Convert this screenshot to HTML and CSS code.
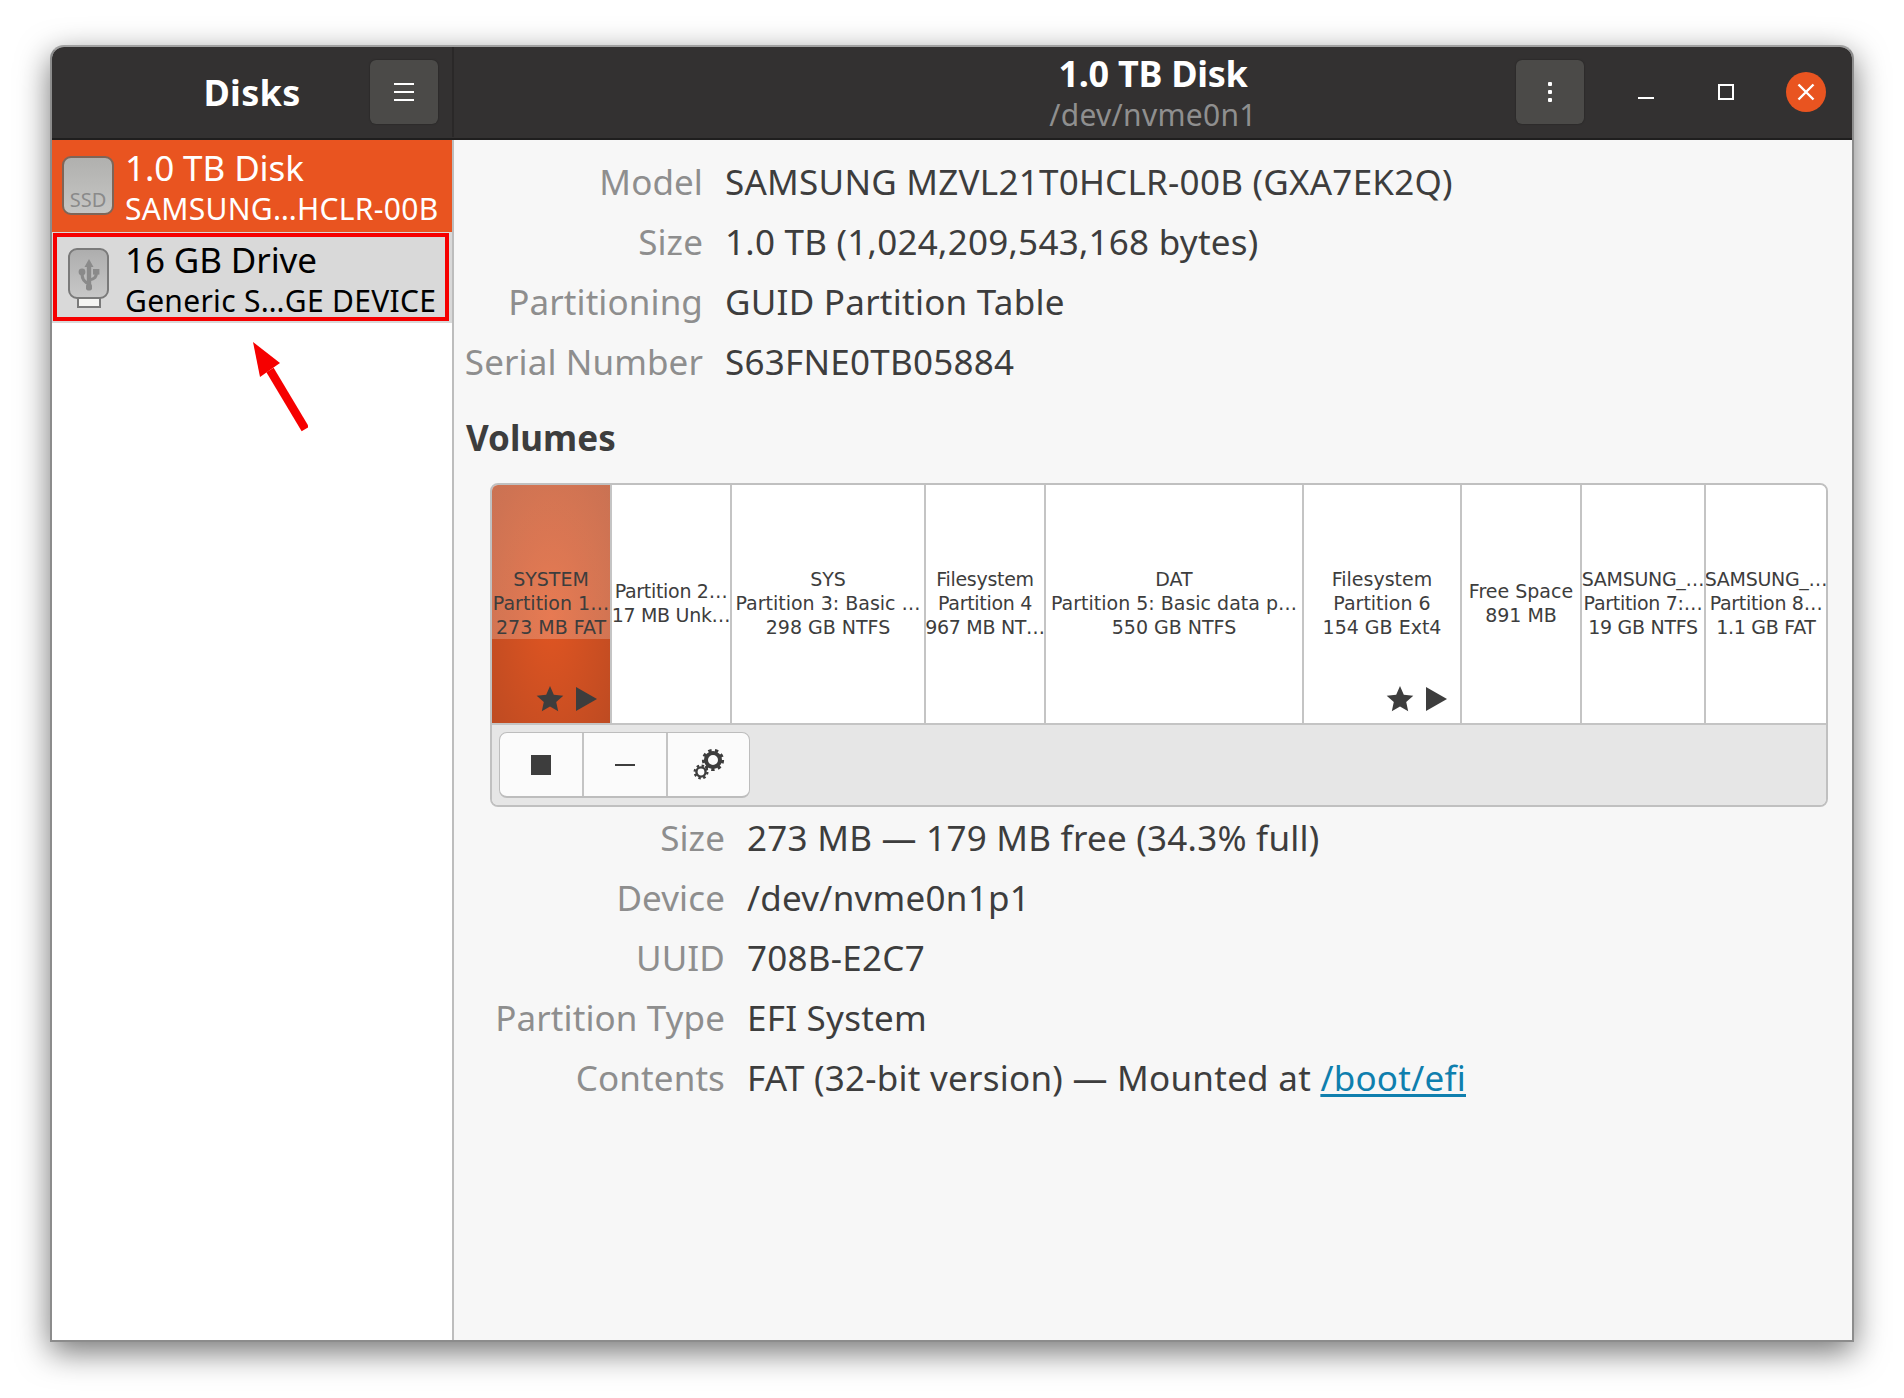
FILE: index.html
```html
<!DOCTYPE html>
<html lang="en">
<head>
    <meta charset="UTF-8">
    <title>Disks</title>
    <link rel="stylesheet" href="styles.css">
</head>
<body>
    <div class="window">
        <header class="titlebar">
            <div class="head head-side">
                <span></span>
                <h1 class="app-title">Disks</h1>
                <button class="head-btn menu-btn" aria-label="Menu"><i></i><i></i><i></i></button>
            </div>
            <div class="head head-main">
                <span></span>
                <div class="disk-title">
                    <h2>1.0 TB Disk</h2>
                    <p>/dev/nvme0n1</p>
                </div>
                <div class="controls">
                    <button class="head-btn kebab-btn" aria-label="Drive options"><i></i><i></i><i></i></button>
                    <button class="win-btn" aria-label="Minimize"><span class="win-min"></span></button>
                    <button class="win-btn" aria-label="Maximize"><span class="win-max"></span></button>
                    <button class="win-btn" aria-label="Close">
                        <svg class="win-close" viewBox="0 0 40 40">
                            <circle cx="20" cy="20" r="20" fill="#e95420"/>
                            <path d="M12.5 12.5l15 15M27.5 12.5l-15 15" stroke="#fff" stroke-width="2.4"/>
                        </svg>
                    </button>
                </div>
            </div>
        </header>

        <div class="content">
            <!-- Drive list -->
            <aside class="sidebar">
                <div class="drive drive-active">
                    <svg class="drive-icon" viewBox="0 0 52 60">
                        <defs>
                            <linearGradient id="ssdFill" x1="0" y1="0" x2="0" y2="1">
                                <stop offset="0" stop-color="#b0b0ae"/>
                                <stop offset="1" stop-color="#c6c6c4"/>
                            </linearGradient>
                        </defs>
                        <rect x="1" y="1" width="50" height="57" rx="8" fill="url(#ssdFill)" stroke="#7d6558" stroke-width="2"/>
                        <text x="26" y="51" class="ssd-label">SSD</text>
                    </svg>
                    <div class="drive-text">
                        <div class="drive-name">1.0 TB Disk</div>
                        <div class="drive-model">SAMSUNG…HCLR-00B</div>
                    </div>
                </div>
                <div class="drive drive-marked">
                    <svg class="drive-icon" viewBox="0 0 52 60">
                        <defs>
                            <linearGradient id="usbFill" x1="0" y1="0" x2="0" y2="1">
                                <stop offset="0" stop-color="#adadad"/>
                                <stop offset="1" stop-color="#c8c8c8"/>
                            </linearGradient>
                        </defs>
                        <rect x="16" y="49" width="22" height="10" fill="#f4f4f2" stroke="#7a7a7a" stroke-width="2"/>
                        <rect x="7" y="1" width="39" height="49" rx="8" fill="url(#usbFill)" stroke="#7a7a7a" stroke-width="2"/>
                        <g fill="#8a8a8a">
                            <polygon points="27,11 22.5,19 31.5,19"/>
                            <rect x="24.8" y="17" width="4.4" height="21"/>
                            <circle cx="20" cy="24" r="3.4"/>
                            <rect x="31" y="21" width="6.4" height="5.6"/>
                            <rect x="24" y="36" width="6" height="6.4" rx="1.8"/>
                        </g>
                        <path d="M27 35.5C21 34 20 30 20 25M27 32C33 31 34.4 29 34.4 24" fill="none" stroke="#8a8a8a" stroke-width="3.2"/>
                    </svg>
                    <div class="drive-text">
                        <div class="drive-name">16 GB Drive</div>
                        <div class="drive-model">Generic S…GE DEVICE</div>
                    </div>
                </div>
                <svg class="arrow" viewBox="0 0 60 95">
                    <path d="M22 33L57.3 92" stroke="#f60000" stroke-width="8.5"/>
                    <polygon points="5,5 12,40 32,26" fill="#f60000"/>
                </svg>
            </aside>

            <main class="details">
                <dl class="props">
                    <dt>Model</dt><dd>SAMSUNG MZVL21T0HCLR-00B (GXA7EK2Q)</dd>
                    <dt>Size</dt><dd>1.0 TB (1,024,209,543,168 bytes)</dd>
                    <dt>Partitioning</dt><dd>GUID Partition Table</dd>
                    <dt>Serial Number</dt><dd>S63FNE0TB05884</dd>
                </dl>

                <h3 class="section-title">Volumes</h3>

                <section class="volumes">
                    <div class="strip">
                        <div class="part part-selected">
                            <div>SYSTEM<br>Partition 1…<br>273 MB FAT</div>
                            <span class="part-flags">
                                <svg viewBox="0 0 28 26"><polygon points="14,0 17.8,8.7 27.3,9.7 20.2,16 22.2,25.3 14,20.5 5.8,25.3 7.8,16 0.7,9.7 10.2,8.7"/></svg>
                                <svg viewBox="0 0 21 24"><polygon points="0,0 21,12 0,24"/></svg>
                            </span>
                        </div>
                        <div class="part part-tight"><div>Partition 2…<br>17 MB Unk…</div></div>
                        <div class="part"><div>SYS<br>Partition 3: Basic …<br>298 GB NTFS</div></div>
                        <div class="part part-tight"><div>Filesystem<br>Partition 4<br>967 MB NT…</div></div>
                        <div class="part"><div>DAT<br>Partition 5: Basic data p…<br>550 GB NTFS</div></div>
                        <div class="part">
                            <div>Filesystem<br>Partition 6<br>154 GB Ext4</div>
                            <span class="part-flags">
                                <svg viewBox="0 0 28 26"><polygon points="14,0 17.8,8.7 27.3,9.7 20.2,16 22.2,25.3 14,20.5 5.8,25.3 7.8,16 0.7,9.7 10.2,8.7"/></svg>
                                <svg viewBox="0 0 21 24"><polygon points="0,0 21,12 0,24"/></svg>
                            </span>
                        </div>
                        <div class="part"><div>Free Space<br>891 MB</div></div>
                        <div class="part part-tight"><div>SAMSUNG_…<br>Partition 7:…<br>19 GB NTFS</div></div>
                        <div class="part part-tight"><div>SAMSUNG_…<br>Partition 8…<br>1.1 GB FAT</div></div>
                    </div>
                    <div class="toolbar">
                        <div class="tool-group">
                            <button class="tool" aria-label="Unmount"><span class="icon-stop"></span></button>
                            <button class="tool" aria-label="Delete"><span class="icon-minus"></span></button>
                            <button class="tool" aria-label="Settings">
                                <svg class="icon-gears" viewBox="0 0 32 32">
                                    <g fill="none" stroke="#3d3d3d">
                                        <circle cx="20" cy="11" r="7" stroke-width="4"/>
                                        <circle cx="20" cy="11" r="9.6" stroke-width="3" stroke-dasharray="3.35 3.35"/>
                                        <circle cx="8" cy="23" r="4.6" stroke-width="2.4"/>
                                        <circle cx="8" cy="23" r="6.4" stroke-width="2.2" stroke-dasharray="2.5 2.5"/>
                                    </g>
                                </svg>
                            </button>
                        </div>
                    </div>
                </section>

                <dl class="props props-volume">
                    <dt>Size</dt><dd>273 MB — 179 MB free (34.3% full)</dd>
                    <dt>Device</dt><dd>/dev/nvme0n1p1</dd>
                    <dt>UUID</dt><dd>708B-E2C7</dd>
                    <dt>Partition Type</dt><dd>EFI System</dd>
                    <dt>Contents</dt><dd>FAT (32-bit version) — Mounted at <a href="#">/boot/efi</a></dd>
                </dl>
            </main>
        </div>
    </div>
</body>
</html>
```

FILE: styles.css
```css
body {
    margin: 0;
    padding: 45px 50px 56px 50px;
    background-color: #ffffff;
    font-family: "Noto Sans", sans-serif;
    color: #3d3d3d;
}

button {
    border: none;
    padding: 0;
    background: none;
    font: inherit;
}

.window {
    display: flex;
    flex-direction: column;
    height: 1297px;
    box-sizing: border-box;
    border: 2px solid #8c8c8c;
    border-top-color: #a0a0a0;
    border-radius: 14px 14px 0 0;
    background-color: #f7f7f7;
    box-shadow: 0 10px 32px rgba(0, 0, 0, 0.55);
}

.titlebar {
    display: flex;
    height: 93px;
    box-sizing: border-box;
    padding-bottom: 1px;
    border-bottom: 2px solid #1f1e1e;
    border-radius: 12px 12px 0 0;
    background-color: #333131;
    color: #ffffff;
}

.head {
    display: grid;
    grid-template-columns: 1fr auto 1fr;
    align-items: center;
}

.head-side {
    width: 400px;
    flex: none;
    border-right: 2px solid #2a2828;
}

.head-main {
    flex: 1;
}

.app-title {
    margin: 0;
    font-size: 36px;
    font-weight: 700;
    letter-spacing: 0.3px;
}

.disk-title {
    margin-top: 2px;
    text-align: center;
}

.disk-title h2 {
    margin: 0;
    font-size: 36px;
    line-height: 44px;
    font-weight: 700;
    letter-spacing: -0.3px;
}

.disk-title p {
    margin: 0;
    font-size: 30px;
    line-height: 38px;
    color: #8f8f8f;
    letter-spacing: 0.3px;
}

.head-btn {
    display: flex;
    flex-direction: column;
    align-items: center;
    justify-content: center;
    width: 68px;
    height: 64px;
    border-radius: 6px;
    background-color: #4b4a48;
    box-shadow: 0 0 2px rgba(0, 0, 0, 0.4);
}

.menu-btn {
    justify-self: end;
    margin-right: 14px;
    gap: 6px;
}

.menu-btn i {
    width: 20px;
    height: 2px;
    background-color: #ffffff;
}

.kebab-btn {
    gap: 4px;
    margin-right: 22px;
}

.kebab-btn i {
    width: 4px;
    height: 4px;
    border-radius: 1px;
    background-color: #ffffff;
}

.controls {
    display: flex;
    align-items: center;
    justify-self: end;
    margin-right: 6px;
}

.win-btn {
    display: flex;
    align-items: center;
    justify-content: center;
    width: 80px;
    height: 64px;
}

.win-min {
    width: 16px;
    height: 2px;
    margin-top: 11px;
    background-color: #ffffff;
}

.win-max {
    width: 12px;
    height: 12px;
    border: 2px solid #ffffff;
}

.win-close {
    display: block;
    width: 40px;
    height: 40px;
}

.content {
    display: flex;
    flex: 1;
    min-height: 0;
}

/* Drive list */
.sidebar {
    position: relative;
    width: 400px;
    flex: none;
    border-right: 2px solid #bdbdbd;
    background-color: #ffffff;
}

.drive {
    display: flex;
    position: relative;
    align-items: center;
    gap: 11px;
    height: 92px;
    box-sizing: border-box;
    padding-left: 10px;
}

.drive-active {
    background-color: #e95420;
    color: #ffffff;
}

.drive-marked {
    height: 91px;
    background-color: #d9d9d9;
    color: #000000;
}

.drive-marked .drive-text {
    margin-top: 2px;
}

.drive-marked::after {
    content: "";
    position: absolute;
    top: 1px;
    right: 3px;
    bottom: 2px;
    left: 1px;
    border: 4px solid #f60000;
}

.drive-icon {
    width: 52px;
    height: 60px;
    flex: none;
}

.ssd-label {
    font-family: "Noto Sans", sans-serif;
    font-size: 20px;
    fill: #8a8a8a;
    text-anchor: middle;
}

.drive-name {
    font-size: 35px;
    line-height: 44px;
    letter-spacing: -0.1px;
}

.drive-model {
    margin-top: 1px;
    font-size: 30px;
    line-height: 36px;
    letter-spacing: 0.3px;
    white-space: nowrap;
}

.arrow {
    position: absolute;
    top: 197px;
    left: 196px;
    width: 60px;
    height: 95px;
}

/* Right pane */
.details {
    flex: 1;
    min-width: 0;
    padding: 12px 24px 0 12px;
}

.props {
    display: grid;
    grid-template-columns: 237px 1fr;
    column-gap: 22px;
    margin: 0;
    font-size: 35px;
    line-height: 60px;
    letter-spacing: 0.25px;
}

.props dt {
    justify-self: end;
    color: #8e8e8e;
    letter-spacing: 0.1px;
    white-space: nowrap;
}

.props dd {
    margin: 0;
    white-space: nowrap;
}

.props a {
    color: #0f7fae;
    text-underline-offset: 3px;
}

.props-volume {
    margin: 1px 0 0 22px;
}

.section-title {
    margin: 26px 0 25px;
    font-size: 35px;
    line-height: 40px;
    font-weight: 700;
    letter-spacing: 0;
}

.volumes {
    margin-left: 24px;
    overflow: hidden;
    border: 2px solid #c0c0c0;
    border-radius: 8px;
}

.strip {
    display: grid;
    grid-template-columns: 120px 120px 194px 120px 258px 158px 120px 124px 1fr;
    height: 240px;
    border-bottom: 2px solid #c4c4c4;
    box-sizing: border-box;
    background-color: #ffffff;
}

.part {
    display: flex;
    position: relative;
    align-items: center;
    justify-content: center;
    overflow: hidden;
    padding-bottom: 2px;
    border-right: 2px solid #c4c4c4;
    font-family: "DejaVu Sans", sans-serif;
    font-size: 19px;
    line-height: 24px;
    text-align: center;
    white-space: nowrap;
}

.part:last-child {
    border-right: none;
}

.part-tight {
    letter-spacing: -0.3px;
}

.part-selected {
    background:
        linear-gradient(rgba(255, 255, 255, 0.22) 154px, transparent 154px),
        radial-gradient(ellipse at 50% 55%, #e05522 0%, #bb4a22 100%);
}

.part-flags {
    display: flex;
    position: absolute;
    right: 13px;
    bottom: 11px;
    align-items: center;
    gap: 12px;
}

.part-flags svg {
    display: block;
    height: 24px;
    fill: #3d3d3d;
}

.part-flags svg:first-child {
    width: 28px;
    height: 26px;
}

.part-flags svg:last-child {
    width: 21px;
}

.toolbar {
    display: flex;
    height: 80px;
    box-sizing: border-box;
    padding: 7px;
    background-color: #e6e6e6;
}

.tool-group {
    display: flex;
    overflow: hidden;
    border: 1px solid #bdbdbd;
    border-bottom-width: 2px;
    border-radius: 8px;
    background-color: #fbfbfb;
}

.tool {
    display: flex;
    align-items: center;
    justify-content: center;
    width: 84px;
    border-right: 2px solid #c4c4c4;
}

.tool:last-child {
    width: 81px;
    border-right: none;
}

.icon-stop {
    width: 20px;
    height: 20px;
    background-color: #3d3d3d;
}

.icon-minus {
    width: 20px;
    height: 2px;
    background-color: #3d3d3d;
}

.icon-gears {
    width: 32px;
    height: 32px;
}
```
